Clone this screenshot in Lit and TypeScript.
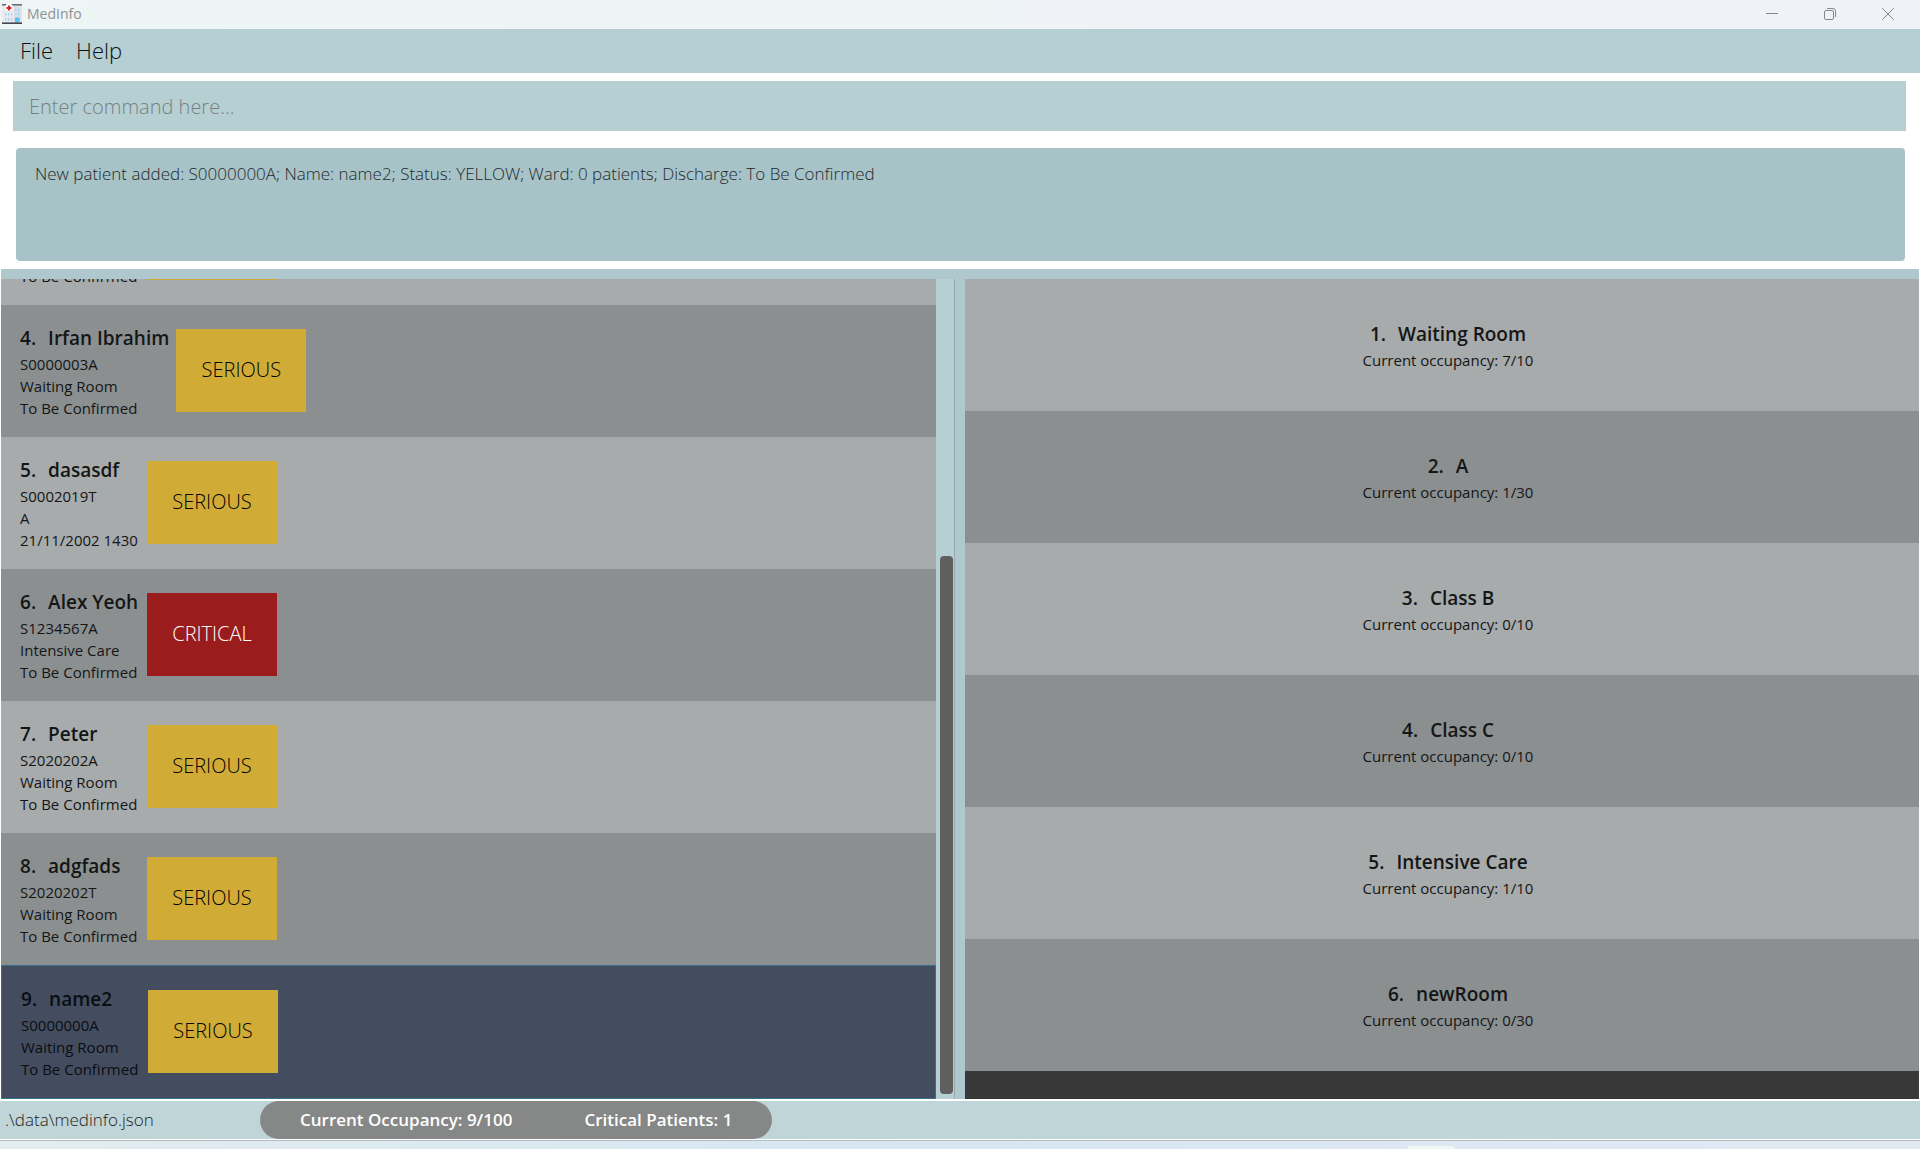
import { LitElement, html, css, svg, nothing } from "lit";
import { customElement, property } from "lit/decorators.js";
import { classMap } from "lit/directives/class-map.js";

interface Patient {
  index?: number;
  name?: string;
  nric?: string;
  ward?: string;
  discharge: string;
  status: "serious" | "critical";
  selected?: boolean;
}

interface Ward {
  name: string;
  taken: number;
  capacity: number;
}

// The first entry is scrolled almost fully out of view: only its last line shows.
const patients: Patient[] = [
  { discharge: "To Be Confirmed", status: "serious" },
  { index: 4, name: "Irfan Ibrahim", nric: "S0000003A", ward: "Waiting Room", discharge: "To Be Confirmed", status: "serious" },
  { index: 5, name: "dasasdf", nric: "S0002019T", ward: "A", discharge: "21/11/2002 1430", status: "serious" },
  { index: 6, name: "Alex Yeoh", nric: "S1234567A", ward: "Intensive Care", discharge: "To Be Confirmed", status: "critical" },
  { index: 7, name: "Peter", nric: "S2020202A", ward: "Waiting Room", discharge: "To Be Confirmed", status: "serious" },
  { index: 8, name: "adgfads", nric: "S2020202T", ward: "Waiting Room", discharge: "To Be Confirmed", status: "serious" },
  { index: 9, name: "name2", nric: "S0000000A", ward: "Waiting Room", discharge: "To Be Confirmed", status: "serious", selected: true },
];

const wards: Ward[] = [
  { name: "Waiting Room", taken: 7, capacity: 10 },
  { name: "A", taken: 1, capacity: 30 },
  { name: "Class B", taken: 0, capacity: 10 },
  { name: "Class C", taken: 0, capacity: 10 },
  { name: "Intensive Care", taken: 1, capacity: 10 },
  { name: "newRoom", taken: 0, capacity: 30 },
];

const rowText = css`
  .name {
    display: flex;
    gap: 12px;
    height: 28px;
    margin: 0 0 1px;
    font-size: 19px;
    line-height: 28px;
    font-weight: 600;
    white-space: nowrap;
  }
  .line {
    height: 22px;
    margin: 0;
    font-size: 15px;
    line-height: 22px;
    white-space: nowrap;
  }
`;

@customElement("title-bar")
class TitleBar extends LitElement {
  static styles = css`
    :host {
      display: flex;
      align-items: center;
      box-sizing: border-box;
      height: 29px;
      flex: none;
      padding: 0 3px 1px 2px;
      background: linear-gradient(90deg, #edf5f5, #eff3f7 60%);
    }
    .logo {
      width: 20px;
      height: 20px;
      margin-right: 5px;
    }
    .title {
      flex: 1;
      font-size: 14px;
      line-height: 20px;
      color: #8d9293;
    }
    .control {
      display: grid;
      place-items: center;
      width: 58px;
      height: 28px;
      margin: 0;
      padding: 0;
      border: 0;
      background: none;
      color: #85898c;
    }
  `;

  render() {
    const panes = [
      [3, 9], [6, 9], [9, 9],
      [3, 14], [6, 14], [9, 14],
      [13, 4.5], [16, 4.5],
      [13, 9], [16, 9],
    ];
    return html`
      <svg class="logo" viewBox="0 0 20 20" aria-hidden="true">
        <rect x="0.5" y="1" width="19" height="18" fill="#e9e9ef" />
        <rect x="12" y="1" width="7.5" height="18" fill="#dedee7" />
        <rect x="0" y="0" width="20" height="1.6" fill="#6e6e7a" />
        <circle cx="7" cy="3.6" r="3.9" fill="#fff" />
        <path d="M6 1.4h2v1.5h1.5v2H8v1.5H6V4.9H4.5v-2H6z" fill="#e2231a" />
        ${panes.map(([x, y]) => svg`<rect x=${x} y=${y} width="1.4" height="2.6" fill="#9fdcf5"/>`)}
        <rect x="13" y="13.5" width="4.6" height="5" fill="#59c3ee" />
        <rect x="0" y="18.4" width="20" height="1.6" fill="#45454f" />
      </svg>
      <span class="title">MedInfo</span>
      <button class="control" aria-label="Minimize">
        <svg width="12" height="12" viewBox="0 0 12 12"><path d="M0 5.5h12" stroke="currentColor" fill="none" /></svg>
      </button>
      <button class="control" aria-label="Restore">
        <svg width="12" height="12" viewBox="0 0 12 12" stroke="currentColor" fill="none">
          <rect x="0.5" y="2.5" width="9" height="9" rx="1.5" />
          <path d="M3 0.5h6a2.5 2.5 0 0 1 2.5 2.5v6" />
        </svg>
      </button>
      <button class="control" aria-label="Close">
        <svg width="12" height="12" viewBox="0 0 12 12"><path d="M0.3 0.3l11.4 11.4M11.7 0.3L0.3 11.7" stroke="currentColor" fill="none" /></svg>
      </button>
    `;
  }
}

@customElement("patient-card")
class PatientCard extends LitElement {
  @property({ attribute: false }) patient!: Patient;

  static styles = [
    rowText,
    css`
      :host {
        display: block;
      }
      .card {
        display: flex;
        align-items: flex-start;
        gap: 7px;
        height: 132px;
        padding: 19px 19px 0;
        box-sizing: border-box;
        color: #141616;
      }
      .card.selected {
        height: 134px;
        border: 1px solid #33728a;
        background: #434d5f;
        color: #0a0d12;
      }
      .details {
        min-width: 120px;
      }
      .badge {
        display: grid;
        place-items: center;
        box-sizing: border-box;
        min-width: 130px;
        height: 83px;
        margin-top: 5px;
        padding: 0 25px 1px;
        font-size: 20px;
        line-height: 28px;
        font-weight: 300;
      }
      .serious {
        background: #d0ac37;
        color: #000;
      }
      .critical {
        background: #9b1c1c;
        color: #fff;
      }
    `,
  ];

  render() {
    const p = this.patient;
    return html`
      <article class=${classMap({ card: true, selected: !!p.selected })}>
        <div class="details">
          <h3 class="name">${p.index ? html`<span>${p.index}.</span><span>${p.name}</span>` : nothing}</h3>
          <p class="line">${p.nric}</p>
          <p class="line">${p.ward}</p>
          <p class="line">${p.discharge}</p>
        </div>
        <span class=${classMap({ badge: true, [p.status]: true })}>${p.index ? p.status.toUpperCase() : nothing}</span>
      </article>
    `;
  }
}

@customElement("ward-card")
class WardCard extends LitElement {
  @property({ attribute: false }) ward!: Ward;
  @property({ type: Number }) index = 1;

  static styles = [
    rowText,
    css`
      :host {
        display: block;
      }
      .card {
        display: flex;
        flex-direction: column;
        align-items: center;
        height: 132px;
        padding: 41px 0 0 12px;
        box-sizing: border-box;
        color: #141616;
      }
    `,
  ];

  render() {
    const w = this.ward;
    return html`
      <article class="card">
        <h3 class="name"><span>${this.index}.</span><span>${w.name}</span></h3>
        <p class="line">Current occupancy: ${w.taken}/${w.capacity}</p>
      </article>
    `;
  }
}

@customElement("app-root")
class AppRoot extends LitElement {
  static styles = css`
    :host {
      display: flex;
      flex-direction: column;
      height: 100vh;
      overflow: hidden;
      background: #fff;
      font-family: "Open Sans", "Noto Sans", sans-serif;
    }
    .menu {
      display: flex;
      flex: none;
      align-items: center;
      gap: 23px;
      box-sizing: border-box;
      height: 44px;
      padding: 0 20px 2px;
      background: #b6cfd3;
    }
    .menu-item {
      margin: 0;
      padding: 0;
      border: 0;
      background: none;
      font: 300 22px/30px "Open Sans", "Noto Sans", sans-serif;
      color: #0c0f10;
    }
    .command {
      flex: none;
      height: 50px;
      margin: 8px 14px 0 13px;
      padding: 0 16px;
      border: 0;
      border-radius: 0;
      box-sizing: border-box;
      background: #b6cfd3;
      font: 300 20px/30px "Open Sans", "Noto Sans", sans-serif;
      color: #141616;
    }
    .command::placeholder {
      color: #797f80;
      opacity: 1;
    }
    .result {
      flex: none;
      height: 113px;
      margin: 17px 15px 8px 16px;
      padding: 14px 19px;
      border: 0;
      border-radius: 4px;
      box-sizing: border-box;
      resize: none;
      background: #a7c3c8;
      font: 300 17px/24px "Open Sans", "Noto Sans", sans-serif;
      color: #1e2a2c;
    }
    .main {
      display: grid;
      grid-template-columns: 935fr 18px 1px 10px 954fr;
      flex: 1;
      min-height: 0;
      margin: 0 1px;
      border-top: 10px solid #afc8cd;
    }
    .list {
      display: flex;
      flex-direction: column;
      min-width: 0;
      min-height: 0;
      overflow: hidden;
      margin: 0;
      padding: 0;
      list-style: none;
    }
    .list > li {
      flex: none;
      background: #a8abac;
    }
    .list > li:nth-child(even) {
      background: #8b8f90;
    }
    .patients {
      justify-content: flex-end;
    }
    .wards {
      background: #383838;
    }
    .track {
      display: flex;
      flex-direction: column;
      justify-content: flex-end;
      padding: 0 1px 5px 4px;
      min-height: 0;
      background: #b6cfd3;
    }
    .thumb {
      height: 66%;
      border-radius: 4px;
      background: #5f5f5f;
    }
    .edge {
      background: #97a9ac;
    }
    .divider {
      background: #afc8cd;
    }
    .status {
      display: flex;
      flex: none;
      align-items: center;
      height: 38px;
      margin-top: 2px;
      background: #c0d5d8;
    }
    .path {
      box-sizing: border-box;
      width: 260px;
      padding-left: 5px;
      font-size: 17px;
      line-height: 24px;
      font-weight: 300;
      color: #1c2223;
    }
    .summary {
      display: flex;
      align-items: center;
      gap: 72px;
      height: 38px;
      padding: 0 40px;
      border-radius: 19px;
      background: #868887;
      font-size: 17px;
      line-height: 24px;
      font-weight: 600;
      color: #fff;
    }
    .backdrop {
      display: grid;
      grid-template-columns: 1407fr 48px 465fr;
      align-items: end;
      flex: none;
      height: 8px;
      margin-top: 1px;
      border-top: 1px solid #b4bcc2;
      background: linear-gradient(90deg, #e2edef, #d7e6f1 45%, #e2e9f3);
    }
    .task {
      grid-column: 2;
      height: 3px;
      border-radius: 3px 3px 0 0;
      background: #f0f5f6;
    }
  `;

  render() {
    return html`
      <title-bar></title-bar>
      <nav class="menu">
        <button class="menu-item">File</button>
        <button class="menu-item">Help</button>
      </nav>
      <input class="command" type="text" aria-label="Command" placeholder="Enter command here..." />
      <textarea
        class="result"
        aria-label="Result"
        readonly
        .value=${"New patient added: S0000000A; Name: name2; Status: YELLOW; Ward: 0 patients; Discharge: To Be Confirmed"}
      ></textarea>
      <main class="main">
        <ul class="list patients">
          ${patients.map((p) => html`<li><patient-card .patient=${p}></patient-card></li>`)}
        </ul>
        <div class="track"><div class="thumb"></div></div>
        <div class="edge"></div>
        <div class="divider"></div>
        <ul class="list wards">
          ${wards.map((w, i) => html`<li><ward-card .ward=${w} .index=${i + 1}></ward-card></li>`)}
        </ul>
      </main>
      <footer class="status">
        <span class="path">.\\data\\medinfo.json</span>
        <div class="summary">
          <span>Current Occupancy: 9/100</span>
          <span>Critical Patients: 1</span>
        </div>
      </footer>
      <div class="backdrop"><div class="task"></div></div>
    `;
  }
}
